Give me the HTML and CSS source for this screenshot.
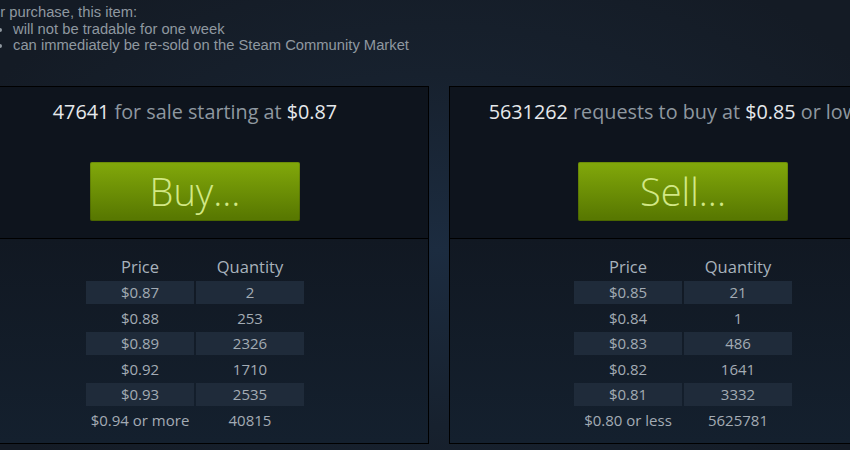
FILE: index.html
```html
<!DOCTYPE html>
<html>
<head>
<meta charset="utf-8">
<link rel="stylesheet" href="styles.css">
</head>
<body>
<div class="note">
  <p>After purchase, this item:</p>
  <ul>
    <li>will not be tradable for one week</li>
    <li>can immediately be re-sold on the Steam Community Market</li>
  </ul>
</div>
<div class="market">
  <section class="panel">
    <div class="panel-top">
      <div class="summary"><span class="num">47641</span> for sale starting at <span class="num">$0.87</span></div>
      <a class="btn">Buy...</a>
    </div>
    <div class="panel-bottom">
      <table class="orders">
        <thead><tr><th>Price</th><th>Quantity</th></tr></thead>
        <tbody>
          <tr class="hl"><td>$0.87</td><td>2</td></tr>
          <tr><td>$0.88</td><td>253</td></tr>
          <tr class="hl"><td>$0.89</td><td>2326</td></tr>
          <tr><td>$0.92</td><td>1710</td></tr>
          <tr class="hl"><td>$0.93</td><td>2535</td></tr>
          <tr><td>$0.94 or more</td><td>40815</td></tr>
        </tbody>
      </table>
    </div>
  </section>
  <section class="panel">
    <div class="panel-top">
      <div class="summary"><span class="num">5631262</span> requests to buy at <span class="num">$0.85</span> or lower</div>
      <a class="btn">Sell...</a>
    </div>
    <div class="panel-bottom">
      <table class="orders">
        <thead><tr><th>Price</th><th>Quantity</th></tr></thead>
        <tbody>
          <tr class="hl"><td>$0.85</td><td>21</td></tr>
          <tr><td>$0.84</td><td>1</td></tr>
          <tr class="hl"><td>$0.83</td><td>486</td></tr>
          <tr><td>$0.82</td><td>1641</td></tr>
          <tr class="hl"><td>$0.81</td><td>3332</td></tr>
          <tr><td>$0.80 or less</td><td>5625781</td></tr>
        </tbody>
      </table>
    </div>
  </section>
</div>
</body>
</html>
```

FILE: styles.css
```css
html, body {
  margin: 0;
  padding: 0;
  height: 100%;
  overflow: hidden;
}
body {
  background: radial-gradient(ellipse 520px 320px at 438px 250px, #1c2c40 0%, #17212e 55%, #141b25 100%);
  font-family: "Open Sans", "Liberation Sans", sans-serif;
}
.note {
  margin-left: -26px;
  padding-top: 4px;
  font-family: "Liberation Sans", Arial, sans-serif;
  font-size: 14.75px;
  line-height: 16.5px;
  color: #8f98a0;
}
.note p {
  margin: 0;
}
.note ul {
  margin: 0;
  padding-left: 39px;
}
.market {
  display: flex;
  gap: 20px;
  margin-top: 32px;
  margin-left: -39px;
}
.panel {
  flex: 0 0 466px;
  min-width: 0;
  border: 1px solid #000;
  display: flex;
  flex-direction: column;
}
.panel-top {
  background: #0e141d;
  height: 151px;
  display: flex;
  flex-direction: column;
  align-items: center;
  border-bottom: 1px solid #000;
}
.summary {
  margin-top: 12px;
  font-size: 19.8px;
  line-height: 26px;
  color: #8f98a0;
  white-space: nowrap;
}
.summary .num {
  color: #e6e9ec;
}
.btn {
  margin-top: 37px;
  width: 210px;
  height: 59px;
  border-radius: 2px;
  background: linear-gradient(to bottom, #80a60a 5%, #587801 95%);
  color: #d2e885;
  font-size: 38px;
  font-weight: 300;
  line-height: 59px;
  text-align: center;
  box-shadow: inset 0 0 0 1px rgba(0,0,0,0.15);
}
.panel-bottom {
  height: 204px;
  background: linear-gradient(to bottom, #111822 0%, #14202e 100%);
  display: flex;
  justify-content: center;
}
.orders {
  margin-top: 14px;
  align-self: flex-start;
  border-collapse: separate;
  border-spacing: 2px;
  font-size: 15px;
  color: #a3abb4;
}
.orders th {
  width: 108px;
  height: 24px;
  padding: 0;
  font-weight: normal;
  font-size: 16.5px;
  color: #a8b2bc;
}
.orders td {
  width: 108px;
  height: 23.5px;
  padding: 0;
  text-align: center;
}
.orders tr.hl td {
  background: #1f2b3a;
}
```
